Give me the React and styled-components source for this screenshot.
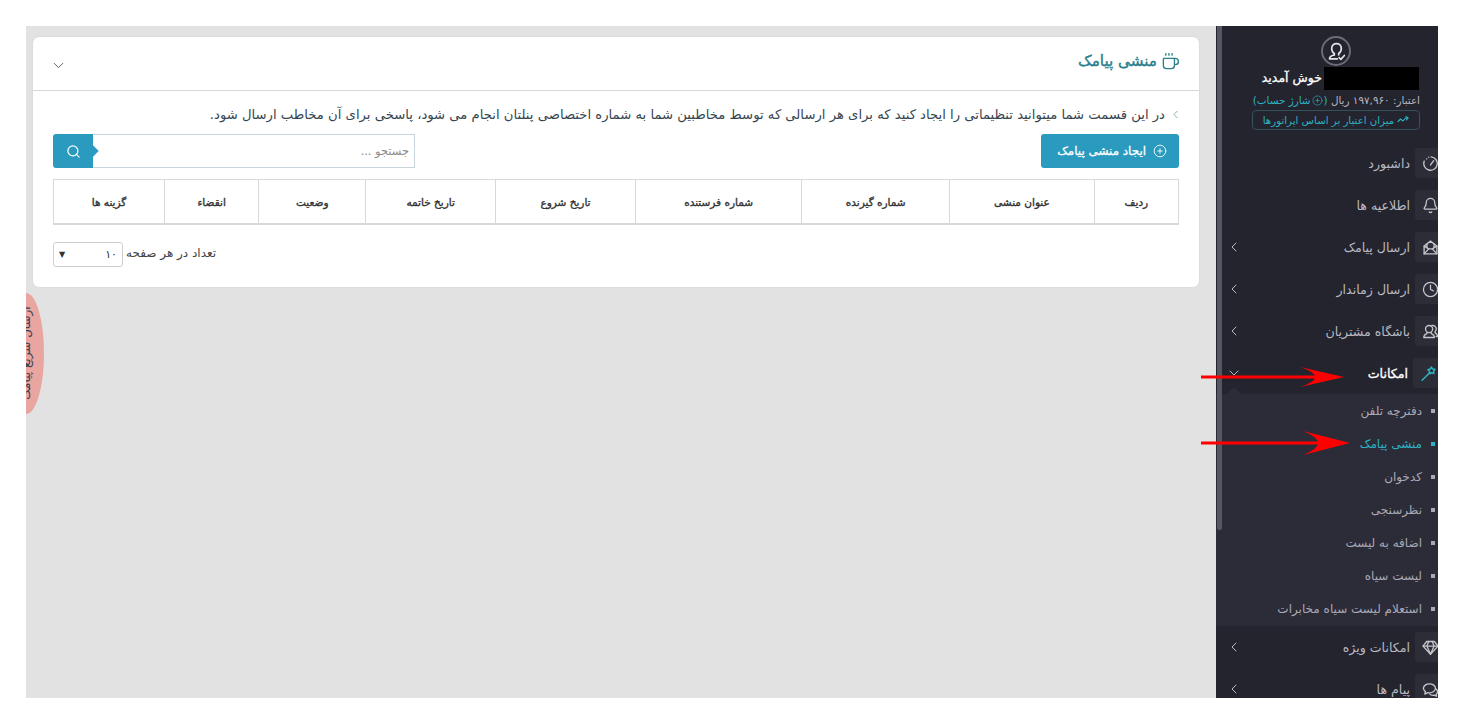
import React from "react";
import styled, { createGlobalStyle } from "styled-components";
import { Bell, ChevronDown, ChevronLeft, CirclePlus, Clock, Coffee, Search } from "lucide-react";

const FONT = `"DejaVu Sans", "Noto Sans", sans-serif`;

const GlobalStyle = createGlobalStyle`
  html, body { margin: 0; padding: 0; background: #fff; }
  body { font-family: ${FONT}; overflow: hidden; }
  * { box-sizing: border-box; }
`;

const columns = [
  ["ردیف", 84], ["عنوان منشی", 145], ["شماره گیرنده", 148], ["شماره فرستنده", 167],
  ["تاریخ شروع", 140], ["تاریخ خاتمه", 130], ["وضعیت", 107], ["انقضاء", 94], ["گزینه ها", 111],
];

const subItems = [
  ["دفترچه تلفن"], ["منشی پیامک", true], ["کدخوان"], ["نظرسنجی"],
  ["اضافه به لیست"], ["لیست سیاه"], ["استعلام لیست سیاه مخابرات"],
];

const Icon = ({ size = 17, width = 1.9, children }) => (
  <svg width={size} height={size} viewBox="0 0 24 24" fill="none" stroke="currentColor"
    strokeWidth={width} strokeLinecap="round" strokeLinejoin="round">
    {children}
  </svg>
);

const GaugeIcon = () => (
  <Icon>
    <path d="M13 2.600a9.500 9.500 0 1 1-9.800 6" />
    <path d="M12 14l4.500-6" />
    <path d="M6.500 5.500l.01 0M9.500 3.200l.01 0" />
  </Icon>
);

const MailIcon = () => (
  <Icon>
    <path d="M3 10l9-7 9 7v11H3z" />
    <path d="M3 21l6.500-7h5L21 21" />
    <path d="M3 10l6.500 4M21 10l-6.500 4" />
    <path d="M7 7v5M17 7v5" />
  </Icon>
);

const UsersIcon = () => (
  <Icon>
    <circle cx="10" cy="8.500" r="5" />
    <path d="M7 13.500V15c-2 1-4.500 1.500-4.500 5.500h15c0-4-2.500-4.500-4.500-5.500v-1.500" />
    <path d="M14 3.500a5 5 0 0 1 4.500 8.500v2c1.500.7 3.500 1.500 3.500 5h-2" />
  </Icon>
);

const WandIcon = () => (
  <Icon width={2.100}>
    <path d="M3 21.500L12.500 12" />
    <path d="M16 3l1.800 2.700 3.200.4-1.800 2.700.4 3.200-3.200-1-2.900 1.300-.1-3.300-2.200-2.400 3.100-.9z" />
  </Icon>
);

const GemIcon = () => (
  <Icon>
    <path d="M6.500 3.500h11L22.500 10 12 21.500 1.500 10z" />
    <path d="M1.500 10h21" />
    <path d="M9.500 3.500L7 10l5 11.500L17 10l-2.500-6.500" />
  </Icon>
);

const ChatIcon = () => (
  <Icon>
    <path d="M10.500 4C5.800 4 2 6.800 2 10.300c0 1.900 1.100 3.600 2.800 4.700L4 18.500l4.200-2c.7.100 1.500.2 2.300.2 4.700 0 8.500-2.900 8.500-6.400S15.200 4 10.500 4z" />
    <path d="M20 11.500c1.300 1 2 2.300 2 3.700 0 1.400-.8 2.700-2 3.600l.6 2.700-3.500-1.500c-2.300.5-4.700-.1-6.100-1.500" />
  </Icon>
);

const WaveIcon = () => (
  <Icon size={12} width={2.200}>
    <path d="M2 15l5-5 5 4 5-6 5 1" />
    <path d="M18 5l4 3-3 4" />
  </Icon>
);

const AvatarIcon = () => (
  <Icon size={21} width={1.900}>
    <path d="M9.500 16v-1.800C7.500 13 6.500 11 6.500 8.500 6.500 5 9 3 12 3s5.500 2 5.500 5.500c0 2.500-1 4.500-3 5.700V16" />
    <path d="M13 20.500H4c0-3.300 2.500-3.800 5.500-4.500" />
    <path d="M15 19l2 2 4-4.500" />
  </Icon>
);

const App = () => (
  <Page>
    <GlobalStyle />
    <Frame>
      <Main>
        <Card>
          <CardHeader>
            <CardTitle><Coffee size={19} strokeWidth={1.7} />منشی پیامک</CardTitle>
            <HeaderToggle><ChevronDown size={17} strokeWidth={1.3} /></HeaderToggle>
          </CardHeader>
          <CardBody>
            <Intro>
              <IntroMark><ChevronLeft size={13} strokeWidth={1.5} /></IntroMark>
              در این قسمت شما میتوانید تنظیماتی را ایجاد کنید که برای هر ارسالی که توسط مخاطبین شما به شماره اختصاصی پنلتان انجام می شود، پاسخی برای آن مخاطب ارسال شود.
            </Intro>
            <Toolbar>
              <CreateButton><CirclePlus size={14} strokeWidth={1.5} />ایجاد منشی پیامک</CreateButton>
              <SearchBox>
                <SearchInput>جستجو ...</SearchInput>
                <SearchButton><Search size={15} strokeWidth={2} /></SearchButton>
              </SearchBox>
            </Toolbar>
            <TableHead>
              {columns.map(([label, width]) => (
                <HeadCell key={label} $width={width}>{label}</HeadCell>
              ))}
            </TableHead>
            <Pager>
              <PageSelect><span>۱۰</span><Caret>▼</Caret></PageSelect>
              <PagerLabel>تعداد در هر صفحه</PagerLabel>
            </Pager>
          </CardBody>
        </Card>
      </Main>
      <Sidebar>
        <Profile>
          <Avatar><AvatarIcon /></Avatar>
          <Welcome>خوش آمدید</Welcome>
          <Credit>
            اعتبار: ۱۹۷,۹۶۰ ریال
            <ChargeLink> (<CirclePlus size={11} strokeWidth={1.4} />شارژ حساب)</ChargeLink>
          </Credit>
          <OperatorButton><WaveIcon />میزان اعتبار بر اساس اپراتورها</OperatorButton>
          <Redacted />
        </Profile>
        <Menu>
          <MenuRow icon={<GaugeIcon />} label="داشبورد" />
          <MenuRow icon={<Bell size={17} strokeWidth={1.8} />} label="اطلاعیه ها" />
          <MenuRow icon={<MailIcon />} label="ارسال پیامک" arrow />
          <MenuRow icon={<Clock size={17} strokeWidth={1.8} />} label="ارسال زماندار" arrow />
          <MenuRow icon={<UsersIcon />} label="باشگاه مشتریان" arrow />
          <MenuRow icon={<WandIcon />} label="امکانات" open />
        </Menu>
        <SubMenu>
          {subItems.map(([label, active]) => (
            <SubItem key={label} $active={active}><Dot $active={active} />{label}</SubItem>
          ))}
        </SubMenu>
        <Menu $tail>
          <MenuRow icon={<GemIcon />} label="امکانات ویژه" arrow />
          <MenuRow icon={<ChatIcon />} label="پیام ها" arrow />
        </Menu>
        <ScrollThumb />
      </Sidebar>
      <QuickSend><QuickSendLabel>ارسال سریع پیامک</QuickSendLabel></QuickSend>
      <ArrowMark top={341} width={143} height={20} head={44} />
      <ArrowMark top={405} width={149} height={24} head={47} />
    </Frame>
  </Page>
);

const MenuRow = ({ icon, label, arrow, open }) => (
  <Row>
    <IconBox $open={open}>{icon}</IconBox>
    <RowLabel $open={open}>{label}</RowLabel>
    {arrow && <RowChevron><ChevronLeft size={16} strokeWidth={1.5} /></RowChevron>}
    {open && <RowChevron><ChevronDown size={16} strokeWidth={1.5} /></RowChevron>}
  </Row>
);

const ArrowMark = ({ top, width, height, head }) => (
  <ArrowSvg style={{ top }} width={width} height={height} viewBox={`0 0 ${width} ${height}`}>
    <rect x="0" y={height / 2 - 1.5} width={width - head + 16} height="3" fill="#f00" />
    <path
      d={`M${width - head} 0 L${width} ${height / 2} L${width - head} ${height} Q${width - head + 30} ${height / 2} ${width - head} 0Z`}
      fill="#f00"
    />
  </ArrowSvg>
);

const Page = styled.div`
  width: 1464px;
  height: 724px;
  padding: 26px;
`;

const Frame = styled.div`
  position: relative;
  display: flex;
  width: 1412px;
  height: 672px;
  background: #e2e2e2;
`;

const Main = styled.main`
  flex: 1;
  min-width: 0;
  padding: 11px 17px 0 7px;
`;

const Card = styled.section`
  height: 250px;
  background: #fff;
  border-radius: 6px;
  box-shadow: 0 0 2px rgba(0, 0, 0, 0.1);
  direction: rtl;
`;

const CardHeader = styled.header`
  display: flex;
  align-items: center;
  justify-content: space-between;
  height: 54px;
  padding: 0 19px 0 17px;
  border-bottom: 1px solid #d5d9dc;
`;

const CardTitle = styled.h2`
  display: flex;
  align-items: center;
  gap: 4px;
  margin: 0 0 5px;
  color: #2b7f8c;
  font-size: 15.200px;
  font-weight: 400;
  -webkit-text-stroke: 0.4px #2b7f8c;
`;

const HeaderToggle = styled.span`
  display: flex;
  margin-top: 3px;
  color: #555;
`;

const CardBody = styled.div`
  padding: 14px 20px 0;
`;

const Intro = styled.p`
  display: flex;
  align-items: center;
  gap: 4px;
  height: 18px;
  margin: 0 0 11px;
  color: #36454f;
  font-size: 13.200px;
  white-space: nowrap;
`;

const IntroMark = styled.span`
  display: flex;
  margin-right: -3px;
  color: #6f9aa3;
`;

const Toolbar = styled.div`
  display: flex;
  justify-content: space-between;
  height: 34px;
  margin-bottom: 11px;
`;

const CreateButton = styled.button`
  display: flex;
  align-items: center;
  gap: 7px;
  width: 138px;
  padding: 0 12px;
  border: 0;
  border-radius: 3px;
  background: #2a9abf;
  color: #fff;
  font-family: ${FONT};
  font-size: 11.900px;
  font-weight: 400;
  -webkit-text-stroke: 0.3px #fff;
  white-space: nowrap;
`;

const SearchBox = styled.div`
  display: flex;
  width: 362px;
`;

const SearchInput = styled.div`
  flex: 1;
  display: flex;
  align-items: center;
  padding: 0 5px;
  border: 1px solid #c9d5da;
  border-left: 0;
  color: #8a8a8a;
  font-size: 11.400px;
`;

const SearchButton = styled.div`
  position: relative;
  display: flex;
  align-items: center;
  justify-content: center;
  width: 40px;
  border-radius: 3px 0 0 3px;
  background: #2a9abf;
  color: #fff;

  &::before {
    content: "";
    position: absolute;
    top: 13px;
    right: -4px;
    width: 8px;
    height: 8px;
    background: #2a9abf;
    transform: rotate(45deg);
  }
`;

const TableHead = styled.div`
  display: flex;
  height: 46px;
  border: 1px solid #d8d8d8;
  border-bottom-width: 2px;
`;

const HeadCell = styled.div`
  display: flex;
  align-items: center;
  justify-content: center;
  flex: ${(p) => p.$width} 0 0;
  border-left: 1px solid #d8d8d8;
  color: #333;
  font-size: 10.500px;
  font-weight: 400;
  -webkit-text-stroke: 0.35px #333;

  &:last-child { border-left: 0; }
`;

const Pager = styled.div`
  display: flex;
  align-items: center;
  gap: 3px;
  height: 25px;
  margin-top: 17px;
  direction: ltr;
`;

const PagerLabel = styled.span`
  margin-bottom: 3px;
  color: #444;
  font-size: 12px;
  direction: rtl;
`;

const PageSelect = styled.div`
  display: flex;
  align-items: center;
  justify-content: space-between;
  width: 70px;
  height: 25px;
  padding: 0 5px;
  border: 1px solid #cfcfcf;
  border-radius: 3px;
  direction: rtl;
  color: #333;
  font-size: 11px;
`;

const Caret = styled.span`
  font-size: 8px;
`;

const Sidebar = styled.aside`
  position: relative;
  flex: 0 0 222px;
  height: 672px;
  overflow: hidden;
  background: #24242e;
  direction: rtl;
`;

const ScrollThumb = styled.div`
  position: absolute;
  top: 0;
  left: 1px;
  width: 5px;
  height: 504px;
  border-radius: 0 0 3px 3px;
  background: #565663;
`;

const Profile = styled.div`
  position: relative;
  display: flex;
  flex-direction: column;
  align-items: flex-start;
  height: 122px;
  padding: 10px 18px 0;
`;

const Avatar = styled.div`
  display: flex;
  align-items: center;
  justify-content: center;
  width: 30px;
  height: 30px;
  margin-right: 69px;
  border: 2px solid #6b6b75;
  border-radius: 50%;
  color: #e4e4e8;
`;

const Welcome = styled.div`
  margin: 4px 98px 0 0;
  color: #fff;
  font-size: 12.500px;
  line-height: 15px;
  font-weight: 400;
  -webkit-text-stroke: 0.3px #fff;
`;

const Redacted = styled.div`
  position: absolute;
  top: 41px;
  left: 108px;
  width: 95px;
  height: 23px;
  background: #000;
`;

const Credit = styled.div`
  margin-top: 9px;
  color: #b9b9c2;
  font-size: 10.400px;
  white-space: nowrap;
`;

const ChargeLink = styled.span`
  color: #2cb3c4;

  svg { vertical-align: -2px; margin: 0 1px; }
`;

const OperatorButton = styled.div`
  display: flex;
  align-items: center;
  justify-content: center;
  gap: 3px;
  width: 168px;
  height: 20px;
  margin-top: 4px;
  border: 1px solid #33525c;
  border-radius: 4px;
  color: #2cb3c4;
  font-size: 10.200px;
`;

const Menu = styled.nav`
  display: flex;
  flex-direction: column;
  gap: 12px;
  padding-top: ${(p) => (p.$tail ? "6px" : "0")};
`;

const Row = styled.div`
  display: flex;
  align-items: center;
  gap: 5px;
  height: 30px;
`;

const IconBox = styled.div`
  display: flex;
  align-items: center;
  justify-content: center;
  flex: 0 0 30px;
  height: 30px;
  margin-right: ${(p) => (p.$open ? "-5px" : "-7px")};
  border-radius: 3px;
  background: #2d2d38;
  color: ${(p) => (p.$open ? "#2cb3c4" : "#c5c5cc")};
`;

const RowLabel = styled.span`
  color: ${(p) => (p.$open ? "#fff" : "#b9b9c2")};
  font-size: 12.600px;
  -webkit-text-stroke: ${(p) => (p.$open ? "0.35px #fff" : "0")};
`;

const RowChevron = styled.span`
  display: flex;
  margin-right: auto;
  margin-left: 10px;
  color: #b9b9c2;
`;

const SubMenu = styled.div`
  position: relative;
  display: flex;
  flex-direction: column;
  height: 232px;
  margin-top: 6px;
  background: #2c2c38;

  &::before {
    content: "";
    position: absolute;
    top: -5px;
    left: 13px;
    width: 10px;
    height: 10px;
    background: #2c2c38;
    transform: rotate(45deg);
  }
`;

const SubItem = styled.div`
  display: flex;
  align-items: center;
  gap: 9px;
  height: 33px;
  padding-right: 3px;
  color: ${(p) => (p.$active ? "#2cb3c4" : "#a9a9b5")};
  font-size: 12px;
`;

const Dot = styled.span`
  width: 4px;
  height: 4px;
  background: ${(p) => (p.$active ? "#2cb3c4" : "#a9a9b5")};
`;

const QuickSend = styled.div`
  position: absolute;
  top: 267px;
  left: 0;
  width: 18px;
  height: 121px;
  overflow: hidden;
  border-radius: 0 18px 18px 0 / 0 60px 60px 0;
  background: #e9a5a0;
`;

const QuickSendLabel = styled.div`
  position: absolute;
  top: 60px;
  left: -1px;
  width: 120px;
  color: #3a4050;
  font-size: 12px;
  line-height: 14px;
  direction: rtl;
  text-align: center;
  white-space: nowrap;
  transform: translate(-59px, -7px) rotate(-90deg);
`;

const ArrowSvg = styled.svg`
  position: absolute;
  left: 1175px;
  display: block;
`;

export default App;
